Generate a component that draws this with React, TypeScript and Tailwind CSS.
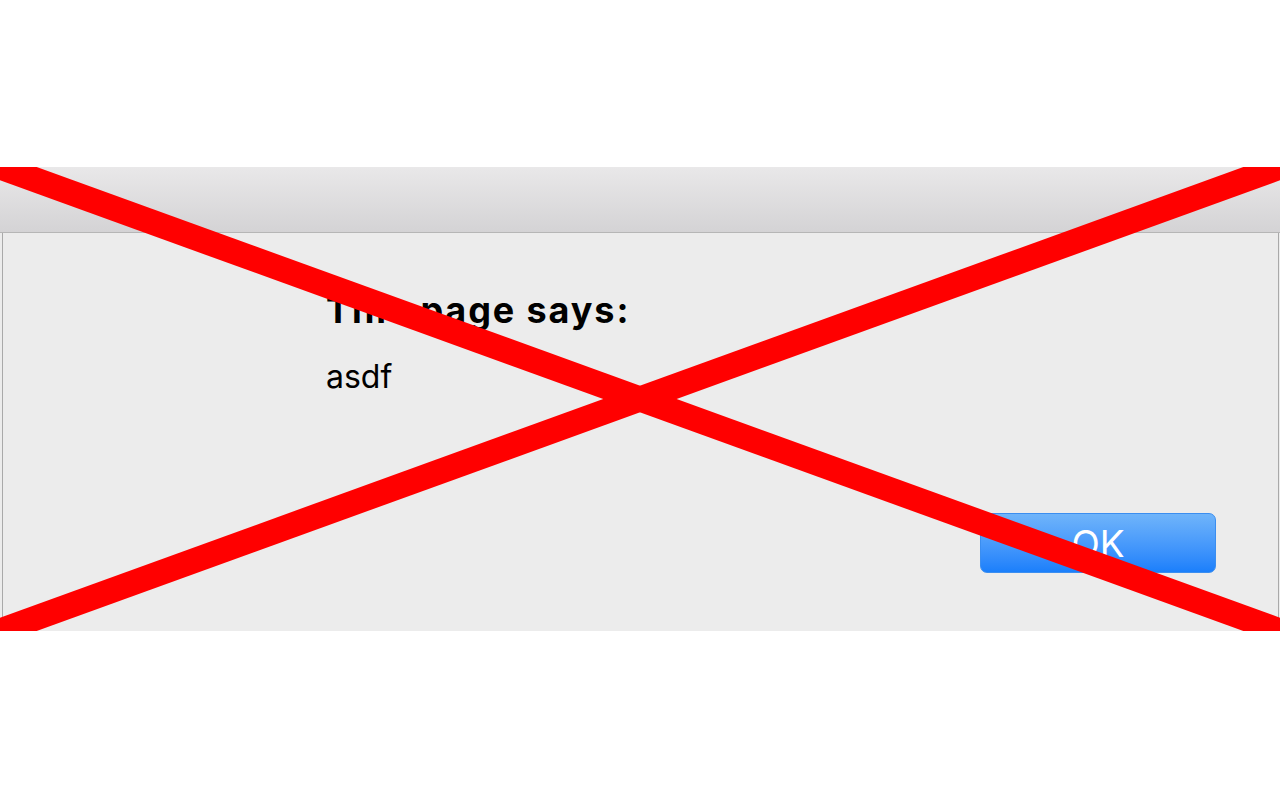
import React from "react";

export default function App() {
  return (
    <div className="w-[1280px] h-[800px] bg-white overflow-hidden" style={{ fontFamily: "Inter, 'Liberation Sans', sans-serif" }}>
      <div className="h-[167px]" />
      <div className="relative w-full h-[464px] bg-[#ececec] overflow-hidden">
        <div className="flex flex-col h-full">
          <div className="h-[66px] bg-gradient-to-b from-[#e9e8e9] to-[#d4d3d5] border-b border-[#b6b6b6]" />
          <div className="flex-1 ml-[2px] mr-[1px] border-l border-r border-[#a9a9a9] flex flex-col">
            <div className="pl-[323px] pt-[57px]">
              <div className="text-[36px] font-bold text-black leading-[40px] tracking-[1.9px]">This page says:</div>
              <div className="text-[32px] text-black leading-[40px] mt-[27px]">asdf</div>
            </div>
            <div className="flex-1" />
            <div className="flex justify-end pr-[62px] pb-[58px]">
              <div className="w-[236px] h-[60px] rounded-[7px] bg-gradient-to-b from-[#6fb4fa] to-[#1a7ffb] border border-[#3b8ef0] flex items-center justify-center text-white text-[37px] leading-none">
                OK
              </div>
            </div>
          </div>
        </div>
        <svg className="absolute inset-0" width="1280" height="464" viewBox="0 0 1280 464">
          <line x1="0" y1="0" x2="1280" y2="464" stroke="#ff0000" strokeWidth="25" />
          <line x1="1280" y1="0" x2="0" y2="464" stroke="#ff0000" strokeWidth="25" />
        </svg>
      </div>
    </div>
  );
}
